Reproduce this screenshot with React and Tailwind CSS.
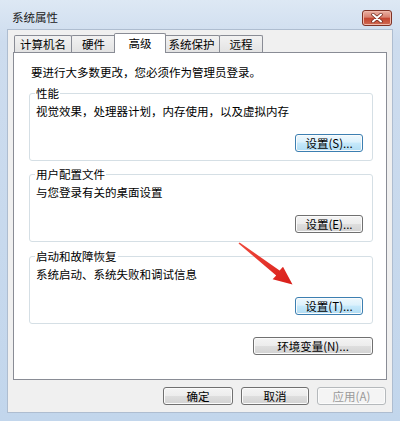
const font = "font-['Noto_Sans_CJK_SC','Microsoft_YaHei',sans-serif]";

function Btn({ children, w = "w-[68px]", kind = "normal" }) {
  const look =
    kind === "focus"
      ? "border-[#3c7fb1] bg-[linear-gradient(to_bottom,#eef8fd_0%,#dcf1fc_45%,#c6e9fb_50%,#b1dcf3_100%)] text-black"
      : kind === "disabled"
      ? "border-[#b5b9bc] bg-[#f4f4f4] text-[#9a9a9a]"
      : "border-[#707070] bg-[linear-gradient(to_bottom,#f4f4f4_0%,#ececec_50%,#dedede_50%,#d2d2d2_100%)] text-black";
  return (
    <div
      className={`${w} h-[18px] flex items-center justify-center rounded-[3px] border shadow-[inset_0_0_0_1px_#fbfbfb] text-[11.5px] leading-[16px] ${look}`}
    >
      {children}
    </div>
  );
}

function Group({ label, desc, button, kind, mt }) {
  return (
    <div className={`relative ${mt} h-[68px] rounded-[3px] border border-[#d5dfe5]`}>
      <span className="absolute -top-[9px] left-[5px] bg-white px-[1px] text-[11.5px] leading-[16px]">
        {label}
      </span>
      <div className="pt-[9px] pl-[6px] text-[11.5px] leading-[16px]">{desc}</div>
      <div className="mt-[15px] flex justify-end pr-[9px]">
        <Btn kind={kind}>{button}</Btn>
      </div>
    </div>
  );
}

function Tab({ children, w, active }) {
  if (active) {
    return (
      <div
        className={`${w} relative z-10 -mb-px -mx-[2px] h-[20px] flex items-start justify-center pt-[1px] bg-white border border-b-0 border-[#898c95] rounded-t-[2px] text-[11.5px] leading-[16px]`}
      >
        {children}
      </div>
    );
  }
  return (
    <div
      className={`${w} -ml-px first:ml-0 h-[17px] flex items-center justify-center bg-[linear-gradient(to_bottom,#f2f2f2,#e3e3e3)] border border-b-0 border-[#898c95] rounded-t-[2px] text-[11.5px] leading-[16px]`}
    >
      {children}
    </div>
  );
}

export default function App() {
  return (
    <div
      className={`relative w-[400px] h-[421px] flex flex-col overflow-hidden bg-[linear-gradient(to_bottom,#dde8f4_0%,#cddcee_10%,#c2d6ec_100%)] text-black ${font}`}
    >
      {/* title bar */}
      <div className="h-[29px] flex items-start justify-between pl-[12px] pr-[8px]">
        <span className="mt-[9px] text-[11.5px] leading-[16px] text-[#1a1a1a]">系统属性</span>
        <div className="mt-[10px] w-[30px] h-[16px] flex items-center justify-center rounded-[3px] border border-[#7e3226] bg-[linear-gradient(to_bottom,#eab1a4_0%,#d8806f_45%,#c4442f_50%,#cf6a52_100%)] shadow-[inset_0_0_0_1px_#f0b8aa]">
          <svg width="12" height="10" viewBox="0 0 12 10">
            <path d="M2 1.5 L10 8.5 M10 1.5 L2 8.5" stroke="#6b2419" strokeWidth="3.4" strokeLinecap="round" />
            <path d="M2 1.5 L10 8.5 M10 1.5 L2 8.5" stroke="#ffffff" strokeWidth="2" strokeLinecap="round" />
          </svg>
        </div>
      </div>

      {/* client area */}
      <div className="h-[384px] mx-[7px] bg-[#f0f0f0] border border-[#aebdd0] flex flex-col px-[5px]">
        <div className="flex items-end pt-[3px] pl-[1px]">
          <Tab w="w-[58px]">计算机名</Tab>
          <Tab w="w-[45px]">硬件</Tab>
          <Tab w="w-[52px]" active>高级</Tab>
          <Tab w="w-[57px]">系统保护</Tab>
          <Tab w="w-[44px]">远程</Tab>
        </div>

        <div className="h-[328px] bg-white border border-[#898c95] pt-[11px]">
          <div className="pl-[17px] text-[11.5px] leading-[16px]">要进行大多数更改，您必须作为管理员登录。</div>
          <div className="ml-[15px] mr-[13px]">
            <Group
              mt="mt-[13px]"
              label="性能"
              desc="视觉效果，处理器计划，内存使用，以及虚拟内存"
              button="设置(S)..."
              kind="focus"
            />
            <Group
              mt="mt-[13px]"
              label="用户配置文件"
              desc="与您登录有关的桌面设置"
              button="设置(E)..."
            />
            <Group
              mt="mt-[14px]"
              label="启动和故障恢复"
              desc="系统启动、系统失败和调试信息"
              button="设置(T)..."
              kind="focus"
            />
            <div className="mt-[13px] flex justify-end">
              <Btn w="w-[120px]">环境变量(N)...</Btn>
            </div>
          </div>
        </div>

        <div className="mt-[7px] flex justify-end gap-[8px] mr-[1px]">
          <Btn w="w-[70px]">确定</Btn>
          <Btn w="w-[68px]">取消</Btn>
          <Btn w="w-[69px]" kind="disabled">应用(A)</Btn>
        </div>
      </div>

      {/* red annotation arrow */}
      <svg className="absolute left-0 top-0 pointer-events-none" width="400" height="421" viewBox="0 0 400 421">
        <defs>
          <linearGradient id="arw" x1="0" y1="0" x2="1" y2="1">
            <stop offset="0" stopColor="#f04a3c" />
            <stop offset="1" stopColor="#d81e1a" />
          </linearGradient>
        </defs>
        <polygon
          points="238.5,243.6 239.6,242.4 279.6,270.6 283,266.8 292.5,284.5 272.6,279.2 276.2,275.4"
          fill="url(#arw)"
        />
      </svg>
    </div>
  );
}
